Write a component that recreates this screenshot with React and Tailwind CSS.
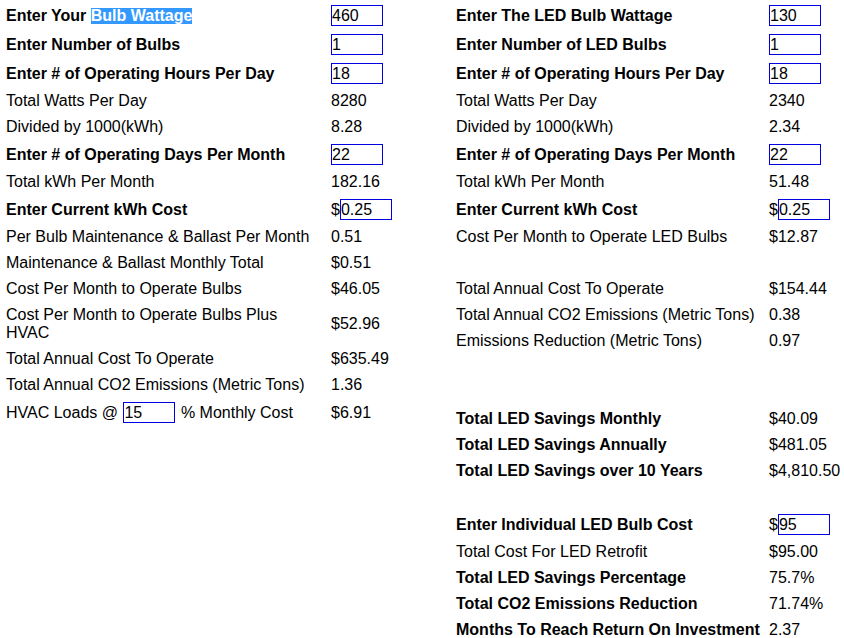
import React from 'react';

function Field({ value, className = '' }) {
  return (
    <input
      readOnly
      value={value}
      className={`h-[21px] w-[52px] border border-[#0000e0] bg-white p-0 text-[16px] leading-[19px] text-black outline-none ${className}`}
      style={{ fontFamily: 'inherit' }}
    />
  );
}

function Row({ label, value, bold, h = 26, labelW }) {
  return (
    <div className="flex items-center" style={{ height: h }}>
      <div className={`${labelW} shrink-0 ${bold ? 'font-bold' : ''}`}>{label}</div>
      <div className="flex items-center whitespace-nowrap">{value}</div>
    </div>
  );
}

export default function App() {
  const L = 'w-[325px] pr-[12px]';
  const R = 'w-[313px] whitespace-nowrap';

  return (
    <div
      className="flex h-[638px] w-[844px] overflow-hidden bg-white pt-[1px] text-[16px] leading-[18px] text-black"
      style={{ fontFamily: '"Liberation Sans", Arial, sans-serif' }}
    >
      {/* left table */}
      <div className="w-[456px] shrink-0 pl-[6px]">
        <Row
          labelW={L}
          h={29}
          bold
          label={
            <>
              Enter Your{' '}
              <span className="inline-block h-[16px] bg-[#3399ff] leading-[16px] text-white">Bulb Wattage</span>
            </>
          }
          value={<Field value="460" />}
        />
        <Row labelW={L} h={29} bold label="Enter Number of Bulbs" value={<Field value="1" />} />
        <Row labelW={L} h={29} bold label="Enter # of Operating Hours Per Day" value={<Field value="18" />} />
        <Row labelW={L} label="Total Watts Per Day" value="8280" />
        <Row labelW={L} label="Divided by 1000(kWh)" value="8.28" />
        <Row labelW={L} h={29} bold label="Enter # of Operating Days Per Month" value={<Field value="22" />} />
        <Row labelW={L} label="Total kWh Per Month" value="182.16" />
        <Row
          labelW={L}
          h={29}
          bold
          label="Enter Current kWh Cost"
          value={
            <>
              $<Field value="0.25" />
            </>
          }
        />
        <Row labelW={L} label="Per Bulb Maintenance & Ballast Per Month" value="0.51" />
        <Row labelW={L} label="Maintenance & Ballast Monthly Total" value="$0.51" />
        <Row labelW={L} label="Cost Per Month to Operate Bulbs" value="$46.05" />
        <Row labelW={L} h={44} label="Cost Per Month to Operate Bulbs Plus HVAC" value="$52.96" />
        <Row labelW={L} label="Total Annual Cost To Operate" value="$635.49" />
        <Row labelW={L} label="Total Annual CO2 Emissions (Metric Tons)" value="1.36" />
        <Row
          labelW={L}
          h={29}
          label={
            <span className="flex items-center whitespace-pre">
              {'HVAC Loads @ '}
              <Field value="15" className="mx-[1px]" />
              {' % Monthly Cost'}
            </span>
          }
          value="$6.91"
        />
      </div>

      {/* right table */}
      <div className="flex-1">
        <Row labelW={R} h={29} bold label="Enter The LED Bulb Wattage" value={<Field value="130" />} />
        <Row labelW={R} h={29} bold label="Enter Number of LED Bulbs" value={<Field value="1" />} />
        <Row labelW={R} h={29} bold label="Enter # of Operating Hours Per Day" value={<Field value="18" />} />
        <Row labelW={R} label="Total Watts Per Day" value="2340" />
        <Row labelW={R} label="Divided by 1000(kWh)" value="2.34" />
        <Row labelW={R} h={29} bold label="Enter # of Operating Days Per Month" value={<Field value="22" />} />
        <Row labelW={R} label="Total kWh Per Month" value="51.48" />
        <Row
          labelW={R}
          h={29}
          bold
          label="Enter Current kWh Cost"
          value={
            <>
              $<Field value="0.25" />
            </>
          }
        />
        <Row labelW={R} label="Cost Per Month to Operate LED Bulbs" value="$12.87" />
        <div className="h-[26px]" />
        <Row labelW={R} label="Total Annual Cost To Operate" value="$154.44" />
        <Row labelW={R} label="Total Annual CO2 Emissions (Metric Tons)" value="0.38" />
        <Row labelW={R} label="Emissions Reduction (Metric Tons)" value="0.97" />
        <div className="h-[52px]" />
        <Row labelW={R} bold label="Total LED Savings Monthly" value="$40.09" />
        <Row labelW={R} bold label="Total LED Savings Annually" value="$481.05" />
        <Row labelW={R} bold label="Total LED Savings over 10 Years" value="$4,810.50" />
        <div className="h-[26px]" />
        <Row
          labelW={R}
          h={29}
          bold
          label="Enter Individual LED Bulb Cost"
          value={
            <>
              $<Field value="95" />
            </>
          }
        />
        <Row labelW={R} label="Total Cost For LED Retrofit" value="$95.00" />
        <Row labelW={R} bold label="Total LED Savings Percentage" value="75.7%" />
        <Row labelW={R} bold label="Total CO2 Emissions Reduction" value="71.74%" />
        <Row labelW={R} bold label="Months To Reach Return On Investment" value="2.37" />
      </div>
    </div>
  );
}
